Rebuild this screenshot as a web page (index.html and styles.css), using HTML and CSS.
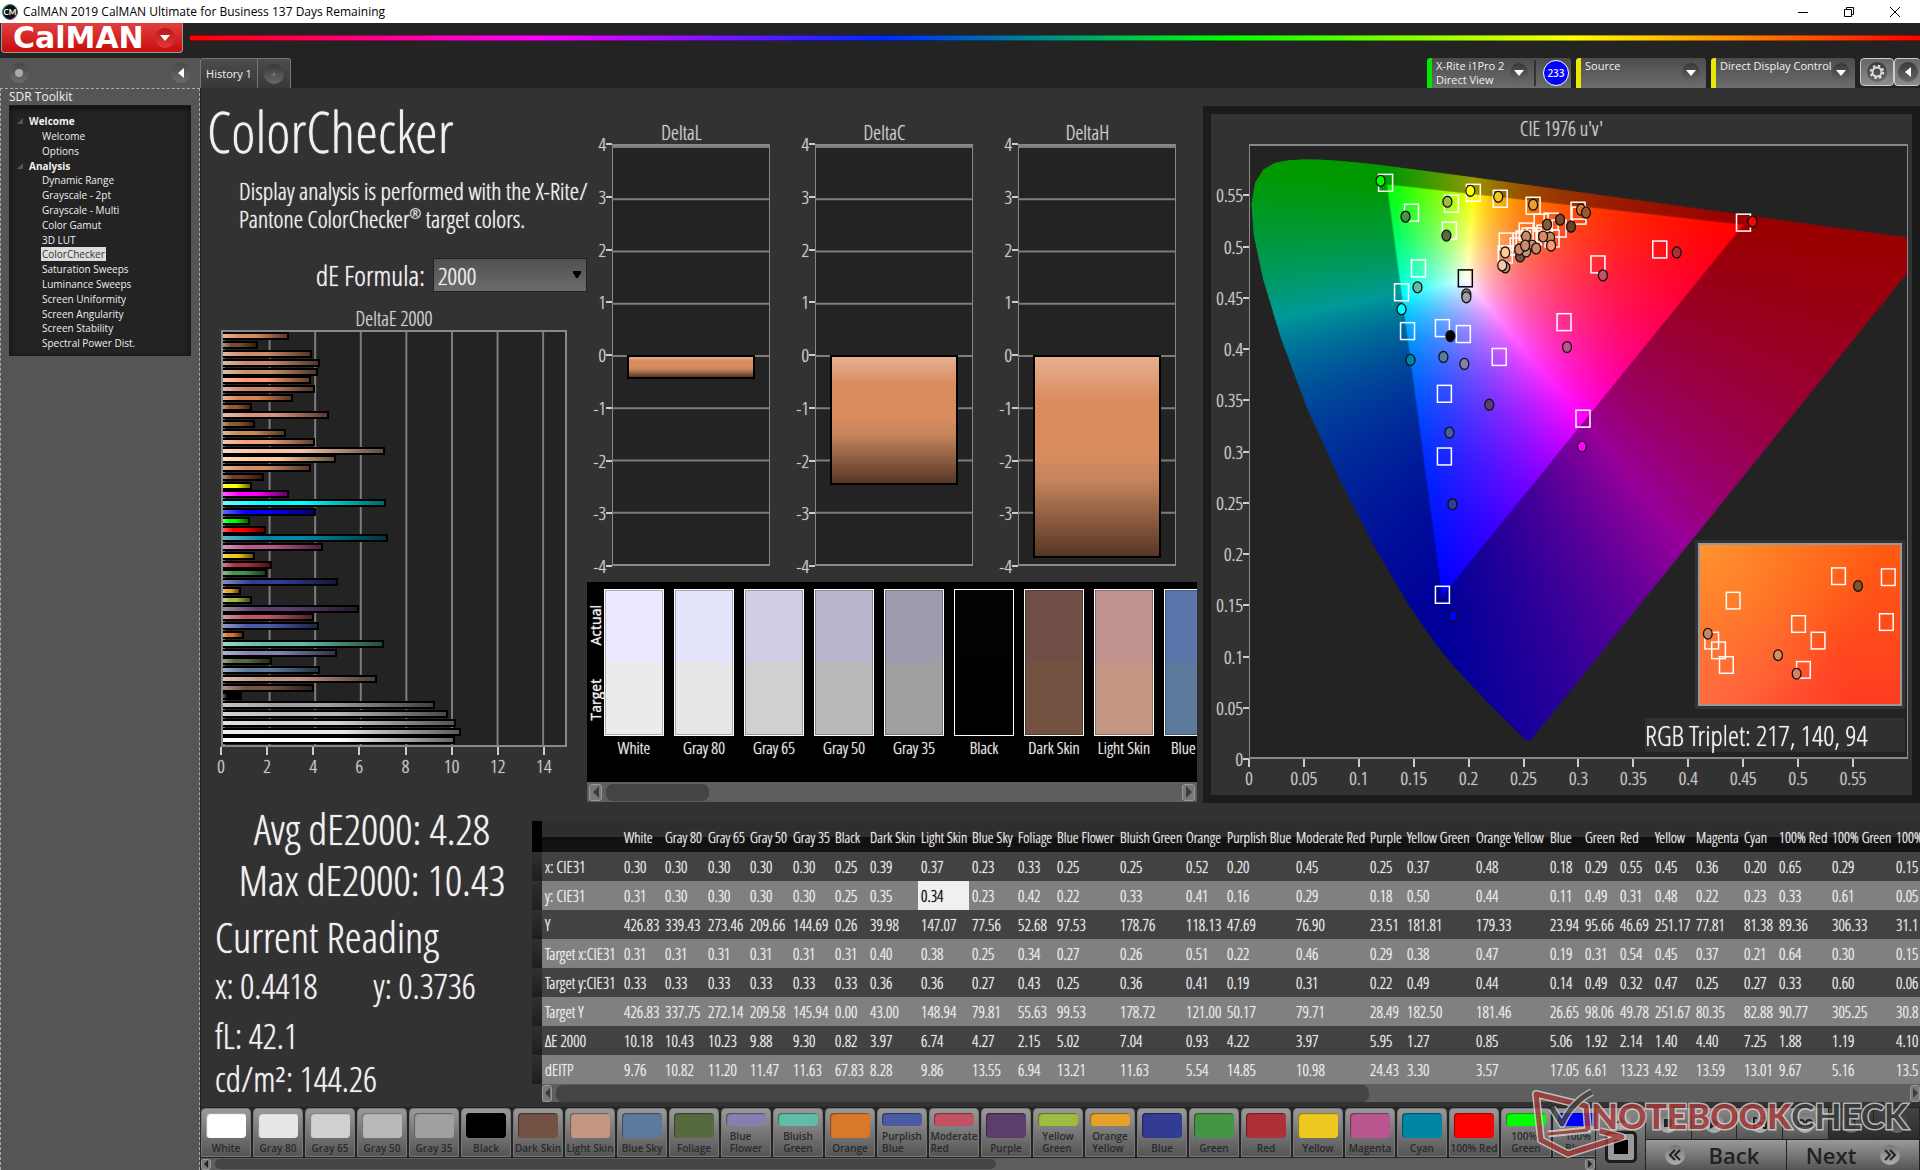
FILE: index.html
```html
<!DOCTYPE html>
<html lang="en">
<head>
    <meta charset="UTF-8">
    <title>CalMAN 2019 CalMAN Ultimate for Business</title>
    <link rel="stylesheet" href="styles.css">
</head>
<body>
    <header class="titlebar">
        <svg class="app-icon" width="16" height="16" viewBox="0 0 16 16">
            <circle cx="8" cy="8" r="7.5" fill="#111" stroke="#3a7a8a"/>
            <path d="M1 6A7.5 7.5 0 0 1 6 1" stroke="#2c2" fill="none"/>
            <path d="M10 15A7.5 7.5 0 0 0 15 10" stroke="#e3c" fill="none"/>
            <text x="8" y="11" text-anchor="middle" font-size="8" font-weight="700" fill="#fff">CM</text>
        </svg>
        <span class="app-title">CalMAN 2019 CalMAN Ultimate for Business 137 Days Remaining</span>
        <div class="win-buttons">
            <button aria-label="Minimize"><svg width="12" height="12"><path d="M1 6.500h10" stroke="#000"/></svg></button>
            <button aria-label="Restore"><svg width="12" height="12" fill="none" stroke="#000"><path d="M1.500 3.500h7v7h-7zM3.500 3.500v-2h7v7h-2"/></svg></button>
            <button aria-label="Close"><svg width="12" height="12"><path d="M1 1l10 10M11 1L1 11" stroke="#000"/></svg></button>
        </div>
    </header>

    <div class="brandbar">
        <button class="brand"><span>CalMAN</span><i class="round dark-red"><svg width="10" height="6"><path d="M0 0h10l-5 6z" fill="#fff"/></svg></i></button>
        <div class="rainbow"></div>
    </div>

    <div class="app">
        <aside class="sidebar">
            <div class="side-head">
                <i class="round"><svg width="8" height="8"><circle cx="4" cy="4" r="4" fill="#aaa"/></svg></i>
                <button class="round" aria-label="Collapse"><svg width="6" height="10"><path d="M6 0v10L0 5z" fill="#fff"/></svg></button>
            </div>
            <div class="side-body">
                <h2>SDR Toolkit</h2>
                <nav class="tree" id="tree"></nav>
            </div>
        </aside>

        <div class="content">
            <div class="tabbar">
                <button class="tab">History 1</button>
                <button class="tab tab-add" aria-label="Add tab"><i class="round dark">+</i></button>
                <div class="devices">
                    <div class="device green">
                        <span>X-Rite i1Pro 2<br>Direct View</span>
                        <button class="round dark" aria-label="Meter menu"><svg width="10" height="6"><path d="M0 0h10l-5 6z" fill="#fff"/></svg></button>
                        <b class="count">233</b>
                    </div>
                    <div class="device source">
                        <span>Source</span>
                        <button class="round dark" aria-label="Source menu"><svg width="10" height="6"><path d="M0 0h10l-5 6z" fill="#fff"/></svg></button>
                    </div>
                    <div class="device display">
                        <span>Direct Display Control</span>
                        <button class="round dark" aria-label="Display menu"><svg width="10" height="6"><path d="M0 0h10l-5 6z" fill="#fff"/></svg></button>
                    </div>
                    <button class="tool" aria-label="Settings"><i class="round dark"><svg width="16" height="16" viewBox="0 0 16 16" fill="none" stroke="#ddd"><circle cx="8" cy="8" r="4.500" stroke-width="2"/><circle cx="8" cy="8" r="6.300" stroke-width="2" stroke-dasharray="2.500 2.450"/></svg></i></button>
                    <button class="tool tool-last" aria-label="Expand"><i class="round dark"><svg width="6" height="10"><path d="M6 0v10L0 5z" fill="#fff"/></svg></i></button>
                </div>
            </div>

            <main class="workspace">
                <div class="upper">
                    <section class="intro">
                        <h1>ColorChecker</h1>
                        <p>Display analysis is performed with the X-Rite/<br>Pantone ColorChecker<sup>®</sup> target colors.</p>
                        <div class="formula">
                            <label for="formula">dE Formula:</label>
                            <select id="formula"><option>2000</option></select>
                        </div>
                        <div class="de-chart">
                            <h3>DeltaE 2000</h3>
                            <div class="de-plot" id="dePlot"></div>
                            <div class="x-axis" id="deAxis"></div>
                        </div>
                    </section>

                    <section class="middle">
                        <div class="deltas" id="deltas"></div>
                        <div class="compare">
                            <div class="compare-side"><span>Actual</span><span>Target</span></div>
                            <div class="compare-list" id="compare"></div>
                        </div>
                        <div class="scroll">
                            <button aria-label="Scroll left"><svg width="6" height="12"><path d="M6 0v12L0 6z" fill="#3c3c3c"/></svg></button>
                            <i class="thumb compare-thumb"></i>
                            <button aria-label="Scroll right"><svg width="6" height="12"><path d="M0 0v12l6-6z" fill="#3c3c3c"/></svg></button>
                        </div>
                    </section>

                    <section class="cie">
                        <h3>CIE 1976 u'v'</h3>
                        <div class="cie-row">
                            <div class="y-axis" id="cieY"></div>
                            <div class="cie-plot">
                                <canvas id="gamut" width="659" height="614"></canvas>
                                <svg id="points" viewBox="0 0 659 614" preserveAspectRatio="none"></svg>
                                <div class="cie-overlay">
                                    <div class="inset"><svg id="insetPoints" viewBox="0 0 205 163" preserveAspectRatio="none"></svg></div>
                                    <div class="triplet">RGB Triplet: 217, 140, 94</div>
                                </div>
                            </div>
                        </div>
                        <div class="x-axis" id="cieX"></div>
                    </section>
                </div>

                <div class="lower">
                    <section class="stats">
                        <div class="stat-big">Avg dE2000: 4.28</div>
                        <div class="stat-big">Max dE2000: 10.43</div>
                        <h2>Current Reading</h2>
                        <div class="reading xy"><span>x: 0.4418</span><span>y: 0.3736</span></div>
                        <div class="reading">fL: 42.1</div>
                        <div class="reading">cd/m²: 144.26</div>
                    </section>
                    <section class="results">
                        <div class="table-wrap"><table id="results"></table></div>
                        <div class="scroll thin">
                            <button aria-label="Scroll left"><svg width="5" height="10"><path d="M5 0v10L0 5z" fill="#3c3c3c"/></svg></button>
                            <i class="thumb results-thumb"></i>
                            <button aria-label="Scroll right"><svg width="5" height="10"><path d="M0 0v10l5-5z" fill="#3c3c3c"/></svg></button>
                        </div>
                    </section>
                </div>
            </main>

            <footer class="bottom">
                <div class="patches">
                    <div class="patch-list" id="patches"></div>
                    <div class="scroll thin">
                        <button aria-label="Scroll left"><svg width="4" height="8"><path d="M4 0v8L0 4z" fill="#222"/></svg></button>
                        <i class="thumb patches-thumb"></i>
                        <button aria-label="Scroll right"><svg width="4" height="8"><path d="M0 0v8l4-4z" fill="#222"/></svg></button>
                    </div>
                </div>
                <div class="pattern">
                    <button class="pattern-up" aria-label="Pattern menu"><i class="round light"><svg width="10" height="6"><path d="M0 6h10l-5-6z" fill="#333"/></svg></i></button>
                    <button class="pattern-box" aria-label="Pattern window"><i></i></button>
                </div>
                <div class="controls">
                    <div class="transport">
                        <button aria-label="Stop"><i class="round light"><svg width="10" height="10"><path d="M1 1h8v8H1z" fill="#222"/></svg></i></button>
                        <button aria-label="Play"><i class="round light"><svg width="10" height="12"><path d="M1 0l9 6-9 6z" fill="#222"/></svg></i></button>
                        <button aria-label="Read series"><i class="round light"><svg width="14" height="12" fill="none" stroke="#222" stroke-width="2"><path d="M4 1H1v10h3M10 1h3v10h-3M4 6h6"/></svg></i></button>
                        <button aria-label="Continuous"><i class="round light"><svg width="16" height="10" fill="none" stroke="#222" stroke-width="2"><circle cx="4" cy="5" r="3"/><circle cx="12" cy="5" r="3"/></svg></i></button>
                        <button class="off" aria-label="Refresh"><i class="round dark"><svg width="12" height="12" fill="none" stroke="#222" stroke-width="2"><path d="M2 7a4 4 0 0 1 8-2M10 6a4 4 0 0 1-8 2"/></svg></i></button>
                        <button class="off" aria-label="More"><i class="round dark"></i></button>
                    </div>
                    <div class="paging">
                        <button><i class="round light"><svg width="12" height="12" fill="none" stroke="#222" stroke-width="2"><path d="M6 1L1 6l5 5M11 1L6 6l5 5"/></svg></i><span>Back</span></button>
                        <button><span>Next</span><i class="round light"><svg width="12" height="12" fill="none" stroke="#222" stroke-width="2"><path d="M1 1l5 5-5 5M6 1l5 5-5 5"/></svg></i></button>
                    </div>
                </div>
            </footer>
        </div>
    </div>

    <svg class="watermark" width="392" height="80" viewBox="0 0 392 80">
        <g fill="none" stroke-linejoin="round">
            <g stroke="#d8d8d8" stroke-width="8">
                <path d="M60 46L58 22 8 10 13 56 40 70 94 53 72 47"/>
                <path d="M58 22L60 46 20 50" stroke-width="7"/>
            </g>
            <g stroke="#a83a3a" stroke-width="5">
                <path d="M60 46L58 22 8 10 13 56 40 70 94 53 72 47"/>
                <path d="M60 46L20 50" stroke-width="3"/>
            </g>
            <path d="M24 24l10 16Q44 18 64 8" stroke="#ccc" stroke-width="8"/>
            <path d="M24 24l10 16Q44 18 64 8" stroke="#444" stroke-width="5"/>
        </g>
        <text x="63" y="45">NOTEBOOK<tspan class="wm-dark">CHECK</tspan></text>
    </svg>

    <script src="script.js"></script>
</body>
</html>
```
FILE: styles.css
```css
* { box-sizing: border-box; }
body {
    margin: 0;
    height: 100vh;
    display: flex;
    flex-direction: column;
    overflow: hidden;
    background: #232323;
    color: #f0f0f0;
    font-family: "Open Sans Condensed Light", "Liberation Sans Narrow", "Noto Sans Condensed", Lato, sans-serif;
    font-size: 13px;
}
h1, h2, h3, p { margin: 0; font-weight: 400; }
button {
    border: 0;
    padding: 0;
    background: none;
    color: inherit;
    font: inherit;
}
svg { display: block; }

.round {
    width: 20px;
    height: 20px;
    border-radius: 50%;
    display: flex;
    align-items: center;
    justify-content: center;
    font-style: normal;
    background: linear-gradient(#484848, #6c6c6c);
    flex: none;
}
.round.dark { background: linear-gradient(#383838, #686868); }
.round.light { background: linear-gradient(#777, #b0b0b0); }
.round.dark-red { background: linear-gradient(#b81818, #e03838); }

/* window title */
.titlebar {
    height: 23px;
    flex: none;
    background: #fff;
    color: #000;
    display: flex;
    align-items: center;
    padding-left: 2px;
    gap: 5px;
    font-family: "Open Sans", sans-serif;
    font-size: 12px;
}
.titlebar svg text { font-family: Lato, sans-serif; }
.win-buttons { margin-left: auto; display: flex; padding-right: 2px; }
.win-buttons button { width: 46px; display: flex; justify-content: center; }

.brandbar {
    height: 35px;
    flex: none;
    display: flex;
    align-items: flex-start;
    gap: 7px;
    padding-left: 1px;
}
.brand {
    width: 182px;
    height: 30px;
    display: flex;
    align-items: center;
    justify-content: space-between;
    padding: 0 7px 0 11px;
    background: linear-gradient(#e24040, #c80c0c);
    border: 1px solid #999;
    border-top: 0;
    border-radius: 0 0 4px 4px;
    font-family: "DejaVu Sans", sans-serif;
    font-size: 30px;
    line-height: 28px;
    font-weight: 700;
    color: #fff;
}
.rainbow {
    flex: 1;
    height: 6px;
    margin-top: 12px;
    background: linear-gradient(90deg, #f00, #f0f 20%, #0028ff 40%, #0f0 60%, #ff0 80%, #f00);
    border-top: 1px solid #0005;
    border-bottom: 1px solid #0006;
}

.app { flex: 1; min-height: 0; display: flex; }

/* sidebar */
.sidebar {
    width: 200px;
    flex: none;
    background: #555;
    display: flex;
    flex-direction: column;
}
.side-head {
    height: 30px;
    display: flex;
    align-items: center;
    justify-content: space-between;
    padding: 0 9px;
}
.side-body {
    flex: 1;
    border: 1px dashed #aaa;
    border-bottom: 0;
    padding: 0 8px;
    font-family: "Open Sans", sans-serif;
}
.side-body h2 { font-size: 12px; line-height: 16px; }
.tree {
    background: #232323;
    border: 1px solid #1a1a1a;
    height: 251px;
    padding: 8px 0 4px;
    display: flex;
    flex-direction: column;
    font-size: 10px;
    line-height: 14px;
    box-shadow: inset 0 3px 5px #111;
}
.tree a, .tree .group { flex: 1; }
.tree a {
    display: block;
    color: #eee;
    text-decoration: none;
    padding-left: 31px;
}
.tree a span { padding: 0 1px; }
.tree a.active span {
    background: #ddd;
    color: #333;
}
.tree .group {
    font-weight: 700;
    display: flex;
    align-items: center;
    gap: 6px;
    padding-left: 7px;
}

.content { flex: 1; min-width: 0; display: flex; flex-direction: column; }
.tabbar {
    height: 30px;
    flex: none;
    display: flex;
    font-family: "Open Sans", sans-serif;
    font-size: 11px;
}
.tab {
    width: 58px;
    background: linear-gradient(#4c4c4c, #383838);
    border: 1px solid #777;
    border-bottom: 0;
    border-radius: 3px 0 0 0;
}
.tab-add {
    width: 34px;
    margin-left: -1px;
    border-radius: 0 3px 0 0;
    display: flex;
    align-items: center;
    justify-content: center;
    color: #888;
}
.devices { margin-left: auto; display: flex; gap: 5px; }
.device {
    display: flex;
    width: 130px;
    padding: 0 6px 0 4px;
    border-left: 5px solid #e8e800;
    border-radius: 3px 3px 0 0;
    background: linear-gradient(#4c4c4c, #6c6c6c);
    font-size: 11px;
    line-height: 14px;
    justify-content: space-between;
    align-items: center;
    white-space: nowrap;
}
.device span { align-self: flex-start; padding-top: 1px; }
.device.green {
    width: 144px;
    border-color: #00e800;
    padding-right: 2px;
    background: linear-gradient(#333, #333) right 35px center / 2px 26px no-repeat, linear-gradient(#4c4c4c, #6c6c6c);
}
.device.green button { margin-right: 10px; }
.device.display { width: 144px; }
.device .round { width: 18px; }
.count {
    width: 26px;
    height: 26px;
    line-height: 24px;
    border-radius: 50%;
    border: 1px solid #fff;
    background: #00f;
    text-align: center;
    font-size: 10px;
    font-weight: 600;
}
.tool {
    width: 34px;
    height: 28px;
    border: 1px solid #ccc;
    border-radius: 4px;
    background: linear-gradient(#666, #8c8c8c);
    display: flex;
    align-items: center;
    justify-content: center;
}
.tool-last { width: 26px; margin-left: -5px; border-right: 0; }

/* workspace */
.workspace {
    flex: 1;
    min-height: 0;
    background: #323232;
    border-left: 1px solid #222;
    display: flex;
    flex-direction: column;
    text-shadow: 0 0 1px;
}
.upper {
    flex: 1;
    min-height: 0;
    display: grid;
    grid-template-columns: minmax(0, 386fr) minmax(0, 616fr) minmax(0, 717fr);
}
.intro { display: flex; flex-direction: column; }
.intro h1 {
    font-size: 58px;
    line-height: 60px;
    padding: 13px 0 0 6px;
    white-space: nowrap;
}
.intro p {
    font-size: 24px;
    line-height: 28px;
    padding: 16px 0 0 38px;
    white-space: nowrap;
}
.intro sup {
    font-size: 14px;
    line-height: 0;
}
.formula {
    display: flex;
    justify-content: flex-end;
    align-items: center;
    gap: 8px;
    height: 59px;
    padding: 25px 0 0;
    font-size: 28px;
}
.formula select {
    width: 154px;
    height: 34px;
    appearance: none;
    border: 1px solid #222;
    border-radius: 0;
    padding: 2px 4px 0;
    color: #eee;
    font: inherit;
    font-size: 24px;
    line-height: 28px;
    text-shadow: inherit;
    background: conic-gradient(from -34deg at 50% 100%, #000 68deg, transparent 0) right 5px center / 8px 8px no-repeat, linear-gradient(#505050, #6c6c6c);
}
.de-chart {
    flex: 1;
    display: flex;
    flex-direction: column;
    padding: 16px 20px 26px 20px;
}
h3 {
    font-size: 20px;
    line-height: 22px;
    text-align: center;
    color: #ccc;
}
.de-plot {
    flex: 1;
    border: 2px solid #888;
    display: flex;
    flex-direction: column;
    background: linear-gradient(90deg, #7d7d7d 2px, transparent 2px) 0 0 / calc(100% / 7.5) 100% #232323;
}
.bar-row { flex: 1; display: flex; align-items: center; }
.bar {
    height: 8px;
    border: 2px solid #000;
    border-left: 0;
    background-image: linear-gradient(90deg, #fff6, transparent 25%, transparent 50%, #0009);
}
.x-axis {
    display: grid;
    grid-auto-flow: column;
    grid-auto-columns: 1fr;
    text-align: center;
    font-size: 19px;
    line-height: 20px;
    color: #ccc;
}
.x-axis span::before {
    content: "";
    display: block;
    width: 2px;
    height: 8px;
    margin: 0 auto 1px;
    background: #ccc;
}
#deAxis { margin-left: calc(100% / -15); padding-bottom: 1px; }
#cieX {
    margin-left: calc(38px - (100% - 42px) / 24);
    margin-right: calc(4px + (100% - 42px) / 24);
    padding-bottom: 7px;
}

.middle { display: flex; flex-direction: column; padding: 0 6px 1px 0; }
.deltas {
    flex: 1;
    display: grid;
    grid-template-columns: 1fr 1fr 1fr;
    column-gap: 20px;
    padding: 34px 21px 16px 0;
}
.delta { display: flex; flex-direction: column; }
.delta h3 { padding-left: 6px; }
.delta-row { flex: 1; display: flex; }
.y-axis {
    display: flex;
    flex-direction: column;
    justify-content: space-between;
    text-align: right;
    font-size: 19px;
    color: #ccc;
    flex: none;
}
.y-axis span {
    height: 0;
    display: flex;
    justify-content: flex-end;
    align-items: center;
}
.y-axis span::after {
    content: "";
    width: 6px;
    height: 2px;
    background: #ccc;
}
.y-axis span:empty::after { display: none; }
.delta .y-axis { width: 25px; }
.delta-plot {
    flex: 1;
    border: 2px solid #888;
    border-width: 2px 1px;
    padding: 0 14px;
    background: linear-gradient(#7d7d7d 2px, transparent 2px) 0 0 / 100% 12.5% #232323;
    display: flex;
    flex-direction: column;
}
.delta-plot::before { content: ""; height: 50%; }
.delta-bar {
    border: 2px solid #000;
    background: linear-gradient(#e6b090, #d98c5e 22%, #d98c5e 48%, #c4845c 62%, #563625);
}

.compare {
    height: 200px;
    background: #000;
    display: flex;
    overflow: hidden;
    padding-top: 7px;
}
.compare-side {
    width: 17px;
    height: 147px;
    flex: none;
    display: flex;
    flex-direction: column;
    font-family: "Open Sans", sans-serif;
    font-size: 14px;
    line-height: 17px;
}
.compare-side span {
    flex: 1;
    writing-mode: vertical-rl;
    rotate: 180deg;
    text-align: center;
}
.compare-list { display: flex; gap: 10px; overflow: hidden; }
.swatch { width: 60px; flex: none; font-size: 17px; line-height: 20px; text-align: center; white-space: nowrap; }
.swatch div {
    height: 147px;
    border: 1px solid #fff;
    outline: 1px solid #0004;
    outline-offset: -2px;
    margin-bottom: 2px;
}

.scroll {
    height: 20px;
    display: flex;
    align-items: center;
    background: #5e5e5e;
    padding: 0 2px;
    gap: 4px;
}
.scroll button {
    width: 13px;
    height: 17px;
    border: 1px solid #999;
    border-radius: 3px;
    background: #777;
    display: flex;
    align-items: center;
    justify-content: center;
}
.scroll button:last-child { margin-left: auto; }
.thumb { height: 17px; border-radius: 7px; background: #444; }
.compare-thumb { width: 17%; }
.scroll.thin { padding: 0; }
.scroll.thin button { width: 10px; }
.results-thumb { width: 59%; }
.patches-thumb { width: 56%; height: 10px; }

.cie {
    margin-top: 18px;
    border: 8px solid #1b1b1b;
    display: flex;
    flex-direction: column;
    min-width: 0;
}
.cie h3 { line-height: 30px; }
.cie-row { flex: 1; display: flex; padding-right: 4px; }
.cie-row .y-axis { width: 38px; }
.cie-plot {
    flex: 1;
    position: relative;
    border: 1px solid #888;
    border-width: 2px 1px;
    background: #232323;
}
.cie-plot canvas, #points {
    position: absolute;
    inset: 0;
    width: 100%;
    height: 100%;
}
.cie-overlay {
    position: absolute;
    right: 2px;
    bottom: 5px;
    display: flex;
    flex-direction: column;
    align-items: flex-end;
    gap: 9px;
}
.inset {
    width: 210px;
    height: 169px;
    border: 3px solid #333;
}
.inset svg {
    width: 100%;
    height: 100%;
    border: 2px solid #999;
    background: radial-gradient(circle at 0 0, #ff9430, transparent 70%), radial-gradient(circle at 0 100%, #ff6844, transparent 60%), linear-gradient(#ff5c12, #ff3c22);
}
.triplet {
    width: 260px;
    height: 34px;
    line-height: 34px;
    background: #303030;
    font-size: 28px;
    white-space: nowrap;
}

/* readings and results table */
.lower { flex: none; display: flex; height: 304px; }
.stats { width: 331px; flex: none; padding-left: 14px; white-space: nowrap; }
.stat-big {
    width: 314px;
    font-size: 43px;
    line-height: 51px;
    text-align: center;
}
.stats h2 { font-size: 43px; line-height: 50px; padding-top: 7px; }
.reading { font-size: 35px; line-height: 43px; display: flex; gap: 56px; }
.reading.xy { padding: 2px 0 7px; }
.results { flex: 1; min-width: 0; display: flex; flex-direction: column; padding-top: 18px; }
.table-wrap { overflow: hidden; }
table {
    width: 0;
    min-width: 100%;
    table-layout: fixed;
    border-collapse: collapse;
    font-size: 16px;
    white-space: nowrap;
}
th, td { padding: 0 3px; text-align: left; font-weight: 400; height: 29px; }
thead th { height: 31px; background: linear-gradient(#2e2e2e 50%, #101010 52%, #141414); font-size: 15px; }
tbody tr { background: #424242; }
tbody tr:nth-child(even) { background: #808080; }
tbody td:first-child { background: linear-gradient(#303030, #1e1e1e); }
thead td { background: #000; }
td.selected { background: #f0f0f0; color: #000; }
.results .scroll { margin-left: 10px; height: 18px; }

/* bottom bar */
.bottom { height: 63px; flex: none; display: flex; background: #232323; padding: 1px 1px 0; gap: 1px; }
.patches { flex: 1; min-width: 0; display: flex; flex-direction: column; }
.patch-list { display: flex; gap: 2px; overflow: hidden; height: 50px; }
.patch {
    width: 50px;
    height: 49px;
    flex: none;
    border-radius: 4px 4px 0 0;
    background: linear-gradient(#9a9a9a, #555);
    border: 1px solid #777;
    display: flex;
    flex-direction: column;
    align-items: center;
    padding: 4px 0 2px;
    font-family: "Open Sans", sans-serif;
    font-size: 10px;
    line-height: 12px;
    font-weight: 600;
    color: #2a2a2a;
    text-align: left;
    white-space: pre;
    gap: 4px;
}
.patch i {
    width: 40px;
    flex: 1;
    border-radius: 4px;
    box-shadow: inset 1px 1px 1px #0006;
}
.patches .scroll { height: 12px; }
.patches .scroll button { height: 11px; }
.pattern { width: 49px; background: linear-gradient(#888, #555); display: flex; flex-direction: column; align-items: center; }
.pattern-up { height: 23px; }
.pattern-box {
    width: 32px;
    height: 32px;
    border: 3px solid #1c1c1c;
    border-radius: 5px;
    background: #999;
    padding: 6px;
}
.pattern-box i { display: block; height: 100%; background: #000; }
.controls { width: 273px; display: flex; flex-direction: column; gap: 1px; }
.transport { flex: 1; display: flex; gap: 1px; }
.transport button {
    flex: 1;
    background: linear-gradient(#888, #555);
    display: flex;
    align-items: center;
    justify-content: center;
}
.transport .off { background: linear-gradient(#444, #2c2c2c); }
.paging { flex: 1; display: flex; gap: 1px; }
.paging button {
    flex: 1;
    display: flex;
    align-items: center;
    justify-content: center;
    gap: 24px;
    background: linear-gradient(#999, #555);
    color: #222;
    font-family: "Open Sans", sans-serif;
    font-size: 22px;
    line-height: 28px;
    font-weight: 600;
}
.paging button:first-child { padding-right: 8px; }

.watermark { position: absolute; right: 0; bottom: 6px; opacity: 0.8; }
.watermark text {
    font-family: Lato, sans-serif;
    font-size: 35px;
    font-weight: 900;
    fill: #a83a3a;
    stroke: #d8d8d8;
    stroke-width: 3px;
    paint-order: stroke;
}
.watermark .wm-dark { fill: #3c3c3c; font-weight: 700; }
```
FILE: script.js
```js
const byId = id => document.getElementById(id);

const tree = {
    Welcome: ["Welcome", "Options"],
    Analysis: ["Dynamic Range", "Grayscale - 2pt", "Grayscale - Multi", "Color Gamut", "3D LUT", "ColorChecker",
        "Saturation Sweeps", "Luminance Sweeps", "Screen Uniformity", "Screen Angularity", "Screen Stability", "Spectral Power Dist."]
};
byId("tree").innerHTML = Object.keys(tree).map(g =>
    `<div class="group"><svg width="6" height="6"><path d="M6 0v6H0z" fill="#555"/></svg>${g}</div>` +
    tree[g].map(n => `<a href="#"${n === "ColorChecker" ? ' class="active"' : ""}><span>${n}</span></a>`).join("")
).join("");

// DeltaE bars, top to bottom
const deBars = [
    [2.9, "#d98c5e"], [1.55, "#7b4a2a"], [3.9, "#cd8b68"], [4.25, "#c78a6c"], [4.15, "#c49070"], [3.85, "#ff9a6e"],
    [4.05, "#cd8468"], [3.07, "#d98252"], [1.28, "#a0562a"], [4.67, "#d6957a"], [1.4, "#8b5a30"], [2.75, "#c98a58"],
    [4.05, "#f0a078"], [7.1, "#f5c0a4"], [4.95, "#ffcb96"], [3.85, "#d08a64"], [1.8, "#6e3f24"], [1.25, "#ffff00"],
    [2.9, "#ff00ff"], [7.15, "#00ffff"], [4.1, "#0000ff"], [1.19, "#00ff00"], [1.88, "#ff0000"], [7.25, "#0086a4"],
    [4.4, "#b9568f"], [1.4, "#edc821"], [2.14, "#af2f37"], [1.92, "#469446"], [5.06, "#323c94"], [0.8, "#e6a22d"],
    [1.27, "#9fbc40"], [5.95, "#5b3e6b"], [3.97, "#c15364"], [4.22, "#4a5aa4"], [0.93, "#d97828"], [7.04, "#61bca5"],
    [5.02, "#8480b0"], [2.15, "#576a3e"], [4.27, "#5d7a9d"], [6.74, "#c29682"], [3.97, "#735244"], [0.82, "#000000"],
    [9.3, "#a0a0a0"], [9.88, "#b9b9b9"], [10.23, "#d0d0d0"], [10.43, "#e6e6e6"], [10.18, "#ffffff"]
];
byId("dePlot").innerHTML = deBars.map(([v, c]) =>
    `<div class="bar-row"><div class="bar" style="width:${v / 15 * 100}%;background-color:${c}"></div></div>`).join("");
byId("deAxis").innerHTML = [0, 2, 4, 6, 8, 10, 12, 14].map(n => `<span>${n}</span>`).join("");

byId("deltas").innerHTML = [["DeltaL", 0.45], ["DeltaC", 2.49], ["DeltaH", 3.88]].map(([name, v]) =>
    `<div class="delta"><h3>${name}</h3><div class="delta-row">
        <div class="y-axis">${[4, 3, 2, 1, 0, -1, -2, -3, -4].map(n => `<span>${n}</span>`).join("")}</div>
        <div class="delta-plot"><div class="delta-bar" style="height:${v / 8 * 100}%"></div></div>
    </div></div>`).join("");

const compare = [
    ["White", "#ebe8ff", "#ebebeb"], ["Gray 80", "#e3e3fc", "#e6e6e6"], ["Gray 65", "#d0cee6", "#d0d0d0"],
    ["Gray 50", "#b9b7ce", "#b9b9b9"], ["Gray 35", "#9d9bad", "#a0a0a0"], ["Black", "#010204", "#000"],
    ["Dark Skin", "#704e46", "#735242"], ["Light Skin", "#c1938f", "#c29682"], ["Blue Sky", "#5c76ac", "#5d7a9d"]
];
byId("compare").innerHTML = compare.map(([n, a, t]) =>
    `<div class="swatch"><div style="background:linear-gradient(${a} 50%, ${t} 50%)"></div>${n}</div>`).join("");

// results table
const columns = [
    ["White", 41], ["Gray 80", 43], ["Gray 65", 42], ["Gray 50", 43], ["Gray 35", 42], ["Black", 35], ["Dark Skin", 51],
    ["Light Skin", 51], ["Blue Sky", 46], ["Foliage", 39], ["Blue Flower", 63], ["Bluish Green", 66], ["Orange", 41],
    ["Purplish Blue", 69], ["Moderate Red", 74], ["Purple", 37], ["Yellow Green", 69], ["Orange Yellow", 74], ["Blue", 35],
    ["Green", 35], ["Red", 35], ["Yellow", 41], ["Magenta", 48], ["Cyan", 35], ["100% Red", 53], ["100% Green", 64], ["100% Blue", 60]
];
const rows = [
    ["x: CIE31", "0.30 0.30 0.30 0.30 0.30 0.25 0.39 0.37 0.23 0.33 0.25 0.25 0.52 0.20 0.45 0.25 0.37 0.48 0.18 0.29 0.55 0.45 0.36 0.20 0.65 0.29 0.15"],
    ["y: CIE31", "0.31 0.30 0.30 0.30 0.30 0.25 0.35 0.34 0.23 0.42 0.22 0.33 0.41 0.16 0.29 0.18 0.50 0.44 0.11 0.49 0.31 0.48 0.22 0.23 0.33 0.61 0.05"],
    ["Y", "426.83 339.43 273.46 209.66 144.69 0.26 39.98 147.07 77.56 52.68 97.53 178.76 118.13 47.69 76.90 23.51 181.81 179.33 23.94 95.66 46.69 251.17 77.81 81.38 89.36 306.33 31.1"],
    ["Target x:CIE31", "0.31 0.31 0.31 0.31 0.31 0.31 0.40 0.38 0.25 0.34 0.27 0.26 0.51 0.22 0.46 0.29 0.38 0.47 0.19 0.31 0.54 0.45 0.37 0.21 0.64 0.30 0.15"],
    ["Target y:CIE31", "0.33 0.33 0.33 0.33 0.33 0.33 0.36 0.36 0.27 0.43 0.25 0.36 0.41 0.19 0.31 0.22 0.49 0.44 0.14 0.49 0.32 0.47 0.25 0.27 0.33 0.60 0.06"],
    ["Target Y", "426.83 337.75 272.14 209.58 145.94 0.00 43.00 148.94 79.81 55.63 99.53 178.72 121.00 50.17 79.71 28.49 182.50 181.46 26.65 98.06 49.78 251.67 80.35 82.88 90.77 305.25 30.8"],
    ["ΔE 2000", "10.18 10.43 10.23 9.88 9.30 0.82 3.97 6.74 4.27 2.15 5.02 7.04 0.93 4.22 3.97 5.95 1.27 0.85 5.06 1.92 2.14 1.40 4.40 7.25 1.88 1.19 4.10"],
    ["dEITP", "9.76 10.82 11.20 11.47 11.63 67.83 8.28 9.86 13.55 6.94 13.21 11.63 5.54 14.85 10.98 24.43 3.30 3.57 17.05 6.61 13.23 4.92 13.59 13.01 9.67 5.16 13.5"]
];
byId("results").innerHTML =
    `<colgroup><col style="width:10px"><col style="width:79px">${columns.map(c => `<col style="width:${c[1]}px">`).join("")}</colgroup>
    <thead><tr><td></td><th></th>${columns.map(c => `<th>${c[0]}</th>`).join("")}</tr></thead>
    <tbody>${rows.map((r, i) => `<tr><td></td><th>${r[0]}</th>${r[1].split(" ").map((v, j) =>
        `<td${i === 1 && j === 7 ? ' class="selected"' : ""}>${v}</td>`).join("")}</tr>`).join("")}</tbody>`;

const patches = [
    ["White", "#fff"], ["Gray 80", "#e6e6e6"], ["Gray 65", "#d0d0d0"], ["Gray 50", "#b9b9b9"], ["Gray 35", "#a0a0a0"],
    ["Black", "#000"], ["Dark Skin", "#735244"], ["Light Skin", "#c29682"], ["Blue Sky", "#5d7a9d"], ["Foliage", "#576a3e"],
    ["Blue\nFlower", "#8480b0"], ["Bluish\nGreen", "#61bca5"], ["Orange", "#d97828"], ["Purplish\nBlue", "#4a5aa4"],
    ["Moderate\nRed", "#c15364"], ["Purple", "#5b3e6b"], ["Yellow\nGreen", "#9fbc40"], ["Orange\nYellow", "#e6a22d"],
    ["Blue", "#323c94"], ["Green", "#469446"], ["Red", "#af2f37"], ["Yellow", "#edc821"], ["Magenta", "#b9568f"],
    ["Cyan", "#0086a4"], ["100% Red", "#f00"], ["100%\nGreen", "#0f0"], ["100%\nBlue", "#00f"]
];
byId("patches").innerHTML = patches.map(([n, c]) =>
    `<button class="patch"><i style="background:${c}"></i>${n}</button>`).join("");

// CIE axes
const ticks = [0.55, 0.5, 0.45, 0.4, 0.35, 0.3, 0.25, 0.2, 0.15, 0.1, 0.05, 0];
byId("cieY").innerHTML = "<span></span>" + ticks.map(t => `<span>${t}</span>`).join("");
byId("cieX").innerHTML = ticks.slice().reverse().map(t => `<span>${t}</span>`).join("");

// gamut colours: spectral locus in xy, 400nm to 700nm
const locus = [
    [.1733, .0048], [.1714, .0051], [.1689, .0069], [.1644, .0109], [.1566, .0177], [.1440, .0297], [.1355, .0399],
    [.1241, .0578], [.1096, .0868], [.0913, .1327], [.0687, .2007], [.0454, .2950], [.0235, .4127], [.0082, .5384],
    [.0039, .6548], [.0139, .7502], [.0389, .8120], [.0743, .8338], [.1142, .8262], [.1547, .8059], [.1929, .7816],
    [.2296, .7543], [.2658, .7243], [.3016, .6923], [.3373, .6589], [.3731, .6245], [.4441, .5547], [.5125, .4866],
    [.5752, .4242], [.6270, .3725], [.6658, .3340], [.6915, .3083], [.7347, .2653]
];
const W = 659, H = 614;
const toPx = ([u, v]) => [u / 0.6 * W, H - v / 0.6 * H];
const uv = ([x, y]) => [4 * x / (-2 * x + 12 * y + 3), 9 * y / (-2 * x + 12 * y + 3)];

const off = document.createElement("canvas");
off.width = W;
off.height = H;
const offCtx = off.getContext("2d");
const img = offCtx.createImageData(W, H);
for (let j = 0; j < H; j++) {
    for (let i = 0; i < W; i++) {
        const u = i / W * 0.6, v = Math.max((H - j) / H * 0.6, 0.001);
        const X = 9 * u / (4 * v), Z = (12 - 3 * u - 20 * v) / (4 * v);
        const rgb = [
            3.2406 * X - 1.5372 - 0.4986 * Z,
            -0.9689 * X + 1.8758 + 0.0415 * Z,
            0.0557 * X - 0.2040 + 1.0570 * Z
        ].map(c => Math.max(c, 0));
        const m = Math.max(...rgb);
        const p = (j * W + i) * 4;
        rgb.forEach((c, k) => img.data[p + k] = 255 * c / m);
        img.data[p + 3] = 255;
    }
}
offCtx.putImageData(img, 0, 0);

const ctx = byId("gamut").getContext("2d");
function fillShape(points) {
    ctx.save();
    ctx.beginPath();
    points.map(toPx).forEach(p => ctx.lineTo(...p));
    ctx.closePath();
    ctx.clip();
    ctx.drawImage(off, 0, 0);
}
fillShape(locus.map(uv));
ctx.fillStyle = "rgba(0,0,0,0.4)";
ctx.fillRect(0, 0, W, H);
ctx.restore();
fillShape([[.64, .33], [.30, .60], [.15, .06]].map(uv));
ctx.restore();

const box = ([x, y], c = "#fff") =>
    `<rect x="${x - 7}" y="${y - 8.5}" width="14" height="17" fill="none" stroke="${c}" stroke-width="1.5"/>`;
const dot = ([x, y, c]) => `<ellipse cx="${x}" cy="${y}" rx="4.5" ry="5.500" fill="${c}" stroke="#111" stroke-width="1.300"/>`;

const targets = [[136, 37], [162, 67], [202, 58], [224, 47], [251, 53], [284, 60], [329, 65], [330, 70], [200, 85],
    [169, 123], [152, 147], [158, 186], [193, 183], [214, 189], [250, 212], [195, 249], [495, 77], [411, 104], [349, 119],
    [315, 177], [334, 274], [292, 77], [302, 76], [310, 83], [277, 86], [280, 91], [257, 96], [256, 109], [268, 101],
    [271, 96], [274, 94], [303, 93], [295, 88], [285, 91], [195, 312], [193, 451]];
const measured = [[131, 35, "#0f0"], [156, 71, "#469446"], [198, 56, "#9fbc40"], [221, 45, "#ff0"], [249, 51, "#edc821"],
    [284, 59, "#e6a22d"], [332, 64, "#d97828"], [337, 67, "#a0562a"], [311, 74, "#7b4a2a"], [298, 79, "#8b5a30"],
    [322, 81, "#6e3f24"], [197, 90, "#576a3e"], [301, 92, "#c98a62"], [294, 91, "#d98c5e"], [277, 91, "#c98a68"],
    [302, 100, "#ff9a6e"], [283, 100, "#c49078"], [287, 103, "#c98a68"], [271, 111, "#735244"], [277, 106, "#c29680"],
    [270, 104, "#c98a68"], [276, 100, "#cd8b68"], [256, 122, "#c29682"], [253, 120, "#f5c8a8"], [256, 107, "#ffcb96"],
    [504, 76, "#f00"], [428, 107, "#af2f37"], [354, 130, "#c15364"], [318, 202, "#b9568f"], [333, 302, "#f0f"],
    [168, 142, "#61bca5"], [152, 164, "#0ff"], [217, 149, "#888"], [217, 152, "#a0a0a0"], [201, 191, "#000"],
    [161, 215, "#0086a4"], [194, 212, "#5d7a9d"], [215, 219, "#8480b0"], [240, 260, "#5b3e6b"], [200, 288, "#4a5aa4"],
    [203, 360, "#323c94"], [204, 472, "#00f"]];
byId("points").innerHTML = targets.map(t => box(t)).join("") + box([216, 133], "#000") + measured.map(dot).join("");

byId("insetPoints").innerHTML =
    [[142, 32], [193, 33], [34, 57], [101, 81], [191, 79], [121, 98], [12, 98], [19, 108], [27, 123], [106, 128]].map(t => box(t)).join("") +
    [[162, 42, "#7b5530"], [8, 91, "#c08a5c"], [80, 113, "#d98c5e"], [99, 132, "#d98060"]].map(dot).join("");
```
